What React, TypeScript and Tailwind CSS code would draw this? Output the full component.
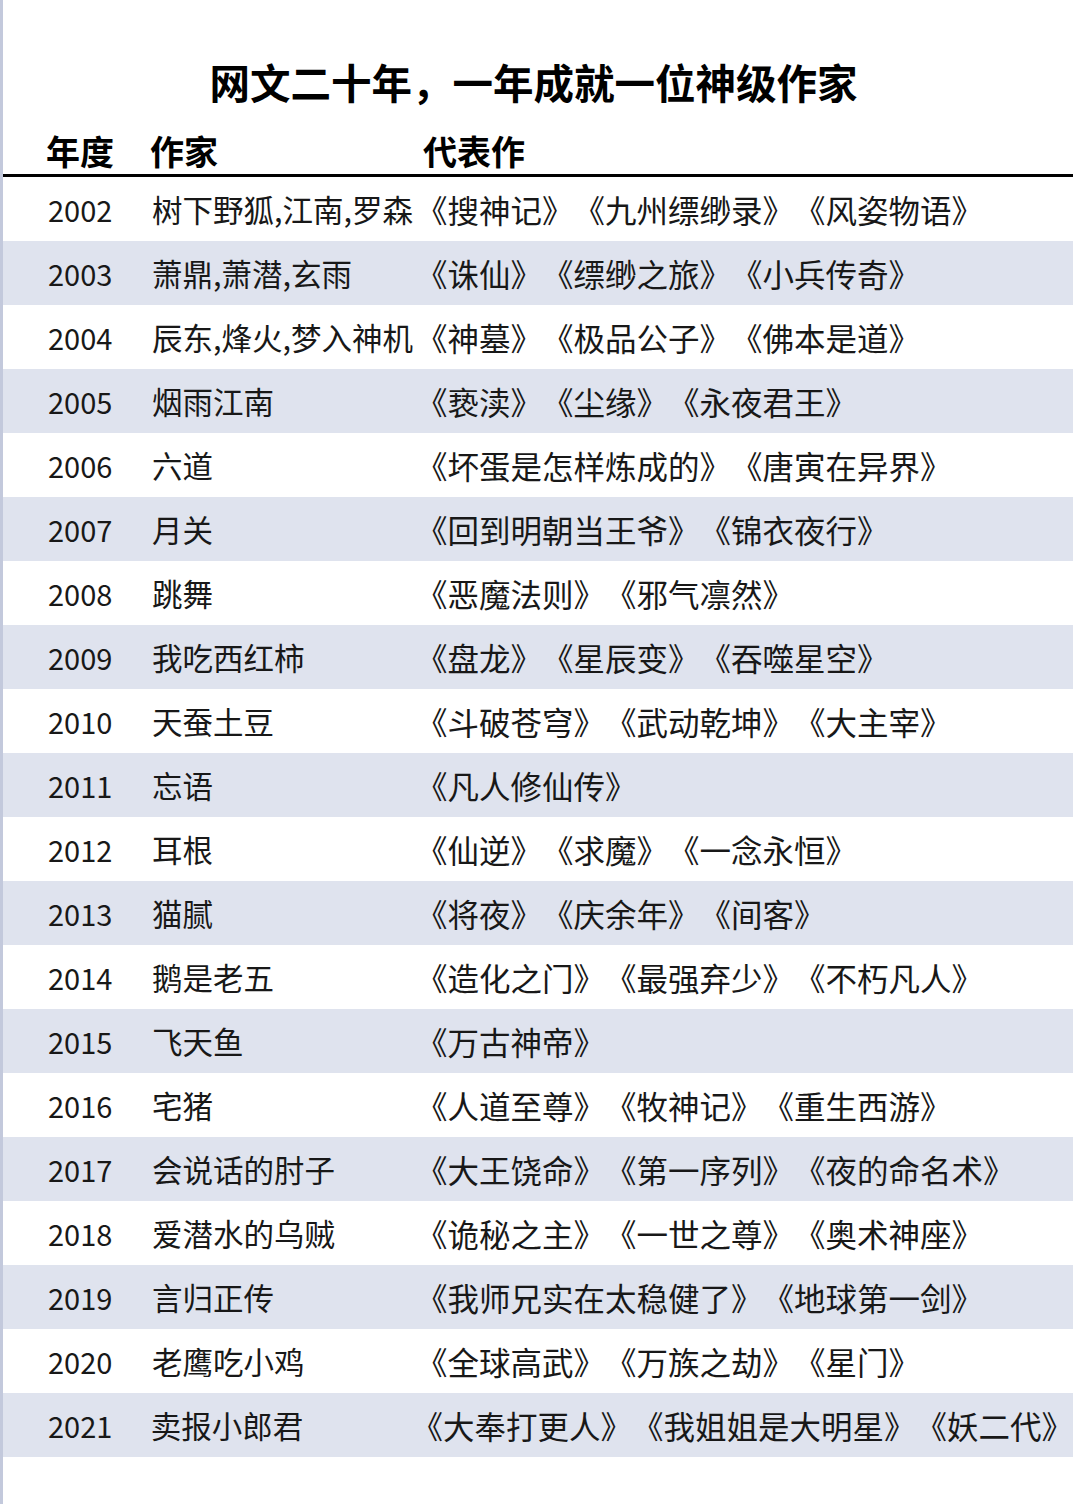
import React from 'react';

const rows: [string, string, string][] = [
  ['2002', '树下野狐,江南,罗森', '《搜神记》《九州缥缈录》《风姿物语》'],
  ['2003', '萧鼎,萧潜,玄雨', '《诛仙》《缥缈之旅》《小兵传奇》'],
  ['2004', '辰东,烽火,梦入神机', '《神墓》《极品公子》《佛本是道》'],
  ['2005', '烟雨江南', '《亵渎》《尘缘》《永夜君王》'],
  ['2006', '六道', '《坏蛋是怎样炼成的》《唐寅在异界》'],
  ['2007', '月关', '《回到明朝当王爷》《锦衣夜行》'],
  ['2008', '跳舞', '《恶魔法则》《邪气凛然》'],
  ['2009', '我吃西红柿', '《盘龙》《星辰变》《吞噬星空》'],
  ['2010', '天蚕土豆', '《斗破苍穹》《武动乾坤》《大主宰》'],
  ['2011', '忘语', '《凡人修仙传》'],
  ['2012', '耳根', '《仙逆》《求魔》《一念永恒》'],
  ['2013', '猫腻', '《将夜》《庆余年》《间客》'],
  ['2014', '鹅是老五', '《造化之门》《最强弃少》《不朽凡人》'],
  ['2015', '飞天鱼', '《万古神帝》'],
  ['2016', '宅猪', '《人道至尊》《牧神记》《重生西游》'],
  ['2017', '会说话的肘子', '《大王饶命》《第一序列》《夜的命名术》'],
  ['2018', '爱潜水的乌贼', '《诡秘之主》《一世之尊》《奥术神座》'],
  ['2019', '言归正传', '《我师兄实在太稳健了》《地球第一剑》'],
  ['2020', '老鹰吃小鸡', '《全球高武》《万族之劫》《星门》'],
  ['2021', '卖报小郎君', '《大奉打更人》《我姐姐是大明星》《妖二代》'],
];

export default function App() {
  return (
    <div
      className="w-[1080px] h-[1504px] bg-white border-l-[3px] border-[#c3c9dc] text-[#181818] overflow-hidden [text-spacing-trim:space-all]"
      style={{ fontFamily: '"Noto Sans CJK SC", "Noto Sans", sans-serif' }}
    >
      <h1 className="pt-[58px] pr-[16px] h-[109px] text-center text-[40.5px] leading-[48px] font-bold text-black">
        网文二十年，一年成就一位神级作家
      </h1>

      <div className="flex h-[65px] pt-[20px] text-[34px] leading-[44px] font-bold text-black">
        <span className="w-[149px] pl-[43px]">年度</span>
        <span className="w-[271px] -ml-[2px]">作家</span>
        <span className="ml-[2px]">代表作</span>
      </div>
      <div className="w-[1070px] h-[3px] bg-black" />

      <div className="flex flex-col">
        {rows.map(([year, author, works], i) => (
          <div
            key={year}
            className={`flex items-center w-[1070px] h-[64px] whitespace-nowrap ${
              i % 2 === 1 ? 'bg-[#dfe3ee]' : ''
            }`}
          >
            <span className="w-[149px] pl-[45px] text-[29px] leading-[40px]">{year}</span>
            <span className="w-[271px] text-[30.5px] leading-[40px]">{author}</span>
            <span className="text-[31.5px] leading-[40px] -ml-[7px]">{works}</span>
          </div>
        ))}
      </div>
    </div>
  );
}
